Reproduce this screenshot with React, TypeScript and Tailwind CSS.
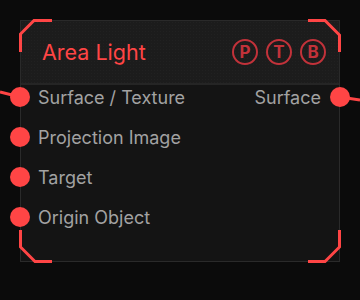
const inputs = ["Surface / Texture", "Projection Image", "Target", "Origin Object"];
const badges = ["P", "T", "B"];

const Corners = () => (
  <svg
    className="pointer-events-none absolute -left-px -top-px overflow-visible"
    width="320"
    height="242"
    viewBox="0 0 320 242"
    fill="none"
    stroke="#ff4545"
    strokeWidth="3"
  >
    <path d="M0.5 32 V14 L14 0.5 H32" />
    <path d="M288 0.5 H305 L319.5 15 V32" />
    <path d="M0.5 210 V227 L15 241.5 H32" />
    <path d="M319.5 210 V227 L305 241.5 H288" />
  </svg>
);

const Dot = ({ side }: { side: "left" | "right" }) => (
  <span
    className={
      "absolute top-1/2 h-5 w-5 -translate-y-1/2 rounded-full bg-[#ff4545] " +
      (side === "left" ? "-left-[11px]" : "-right-[11px]")
    }
  />
);

export default function App() {
  return (
    <div className="relative h-[300px] w-[360px] overflow-hidden bg-[#0b0b0b] pl-5 pt-5 font-['Inter',sans-serif]">
      <svg className="absolute left-0 top-0" width="360" height="300" fill="none" stroke="#ff4545" strokeWidth="3">
        <path d="M0 92 L20 97" />
        <path d="M340 97 L360 100" />
      </svg>
      <div className="relative h-[242px] w-[320px] border border-[#2a2a2a] bg-[#141414]">
        <div className="flex h-[64px] items-center justify-between border-b-2 border-[#252525] bg-[#1c1c1c] bg-[radial-gradient(#212121_1px,transparent_1px)] bg-[size:3px_3px] pl-[21px] pr-[13px]">
          <span className="text-[21.5px] font-normal text-[#ff4545]">Area Light</span>
          <div className="flex gap-[8px]">
            {badges.map((b) => (
              <span
                key={b}
                className="flex h-[26px] w-[26px] items-center justify-center rounded-full border-2 border-[#c2323a] text-[17px] font-bold leading-none text-[#c2323a]"
              >
                {b}
              </span>
            ))}
          </div>
        </div>
        <div className="flex flex-col gap-4">
          {inputs.map((label, i) => (
            <div key={label} className="relative flex h-6 items-center justify-between pl-[17px] pr-[18px] text-[18px] text-[#a2a2a2]">
              <Dot side="left" />
              <span>{label}</span>
              {i === 0 && (
                <>
                  <span>Surface</span>
                  <Dot side="right" />
                </>
              )}
            </div>
          ))}
        </div>
        <Corners />
      </div>
    </div>
  );
}
